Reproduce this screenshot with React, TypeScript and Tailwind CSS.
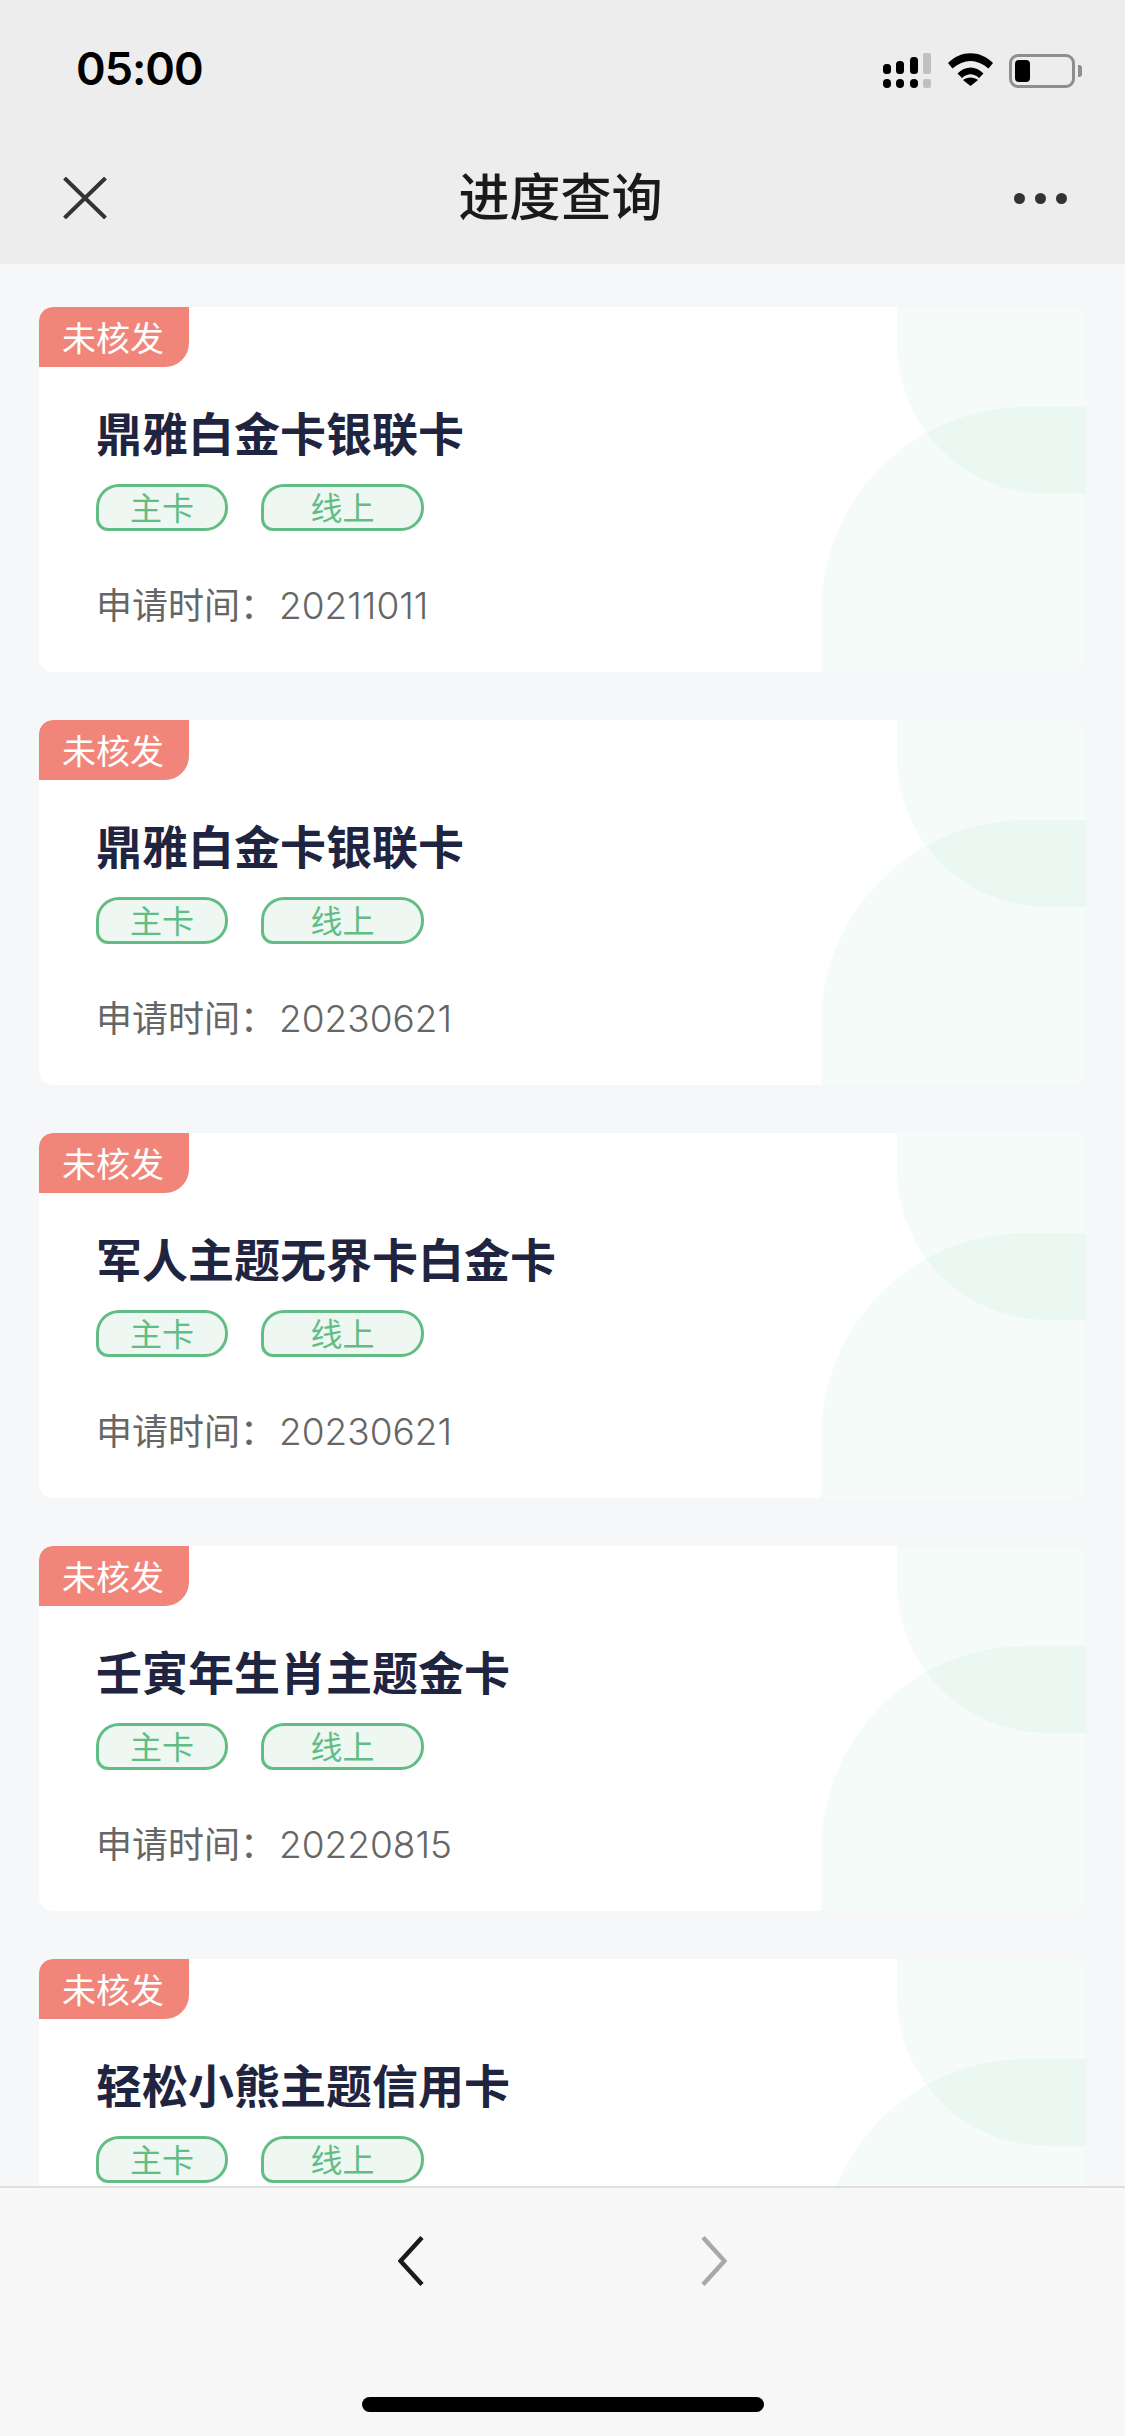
import React from 'react';

const CJK = "font-['Noto_Sans_CJK_SC','Noto_Sans',sans-serif]";

const cards = [
    { name: '鼎雅白金卡银联卡', date: '20211011' },
    { name: '鼎雅白金卡银联卡', date: '20230621' },
    { name: '军人主题无界卡白金卡', date: '20230621' },
    { name: '壬寅年生肖主题金卡', date: '20220815' },
    { name: '轻松小熊主题信用卡', date: '20230621' },
];

function StatusBar() {
    return (
        <div className="flex h-[88px] items-end justify-between pl-[76px] pr-[43px]">
            <span className="font-['Inter',sans-serif] text-[45px] font-semibold leading-[38px] tracking-[-1px] text-black">05:00</span>
            <div className="flex items-center">
                {/* signal */}
                <svg width="48" height="35" viewBox="0 0 48 35" className="mr-[17px]">
                    <rect x="0" y="11" width="8" height="10" rx="3.5" fill="#000" />
                    <rect x="13" y="8" width="8" height="13" rx="3.5" fill="#000" />
                    <rect x="27" y="4" width="8" height="17" rx="3.5" fill="#000" />
                    <rect x="40" y="0" width="8" height="21" rx="2" fill="#c0c0c0" />
                    <rect x="0" y="26" width="8" height="9" rx="4" fill="#000" />
                    <rect x="13" y="26" width="8" height="9" rx="4" fill="#000" />
                    <rect x="27" y="26" width="8" height="9" rx="4" fill="#000" />
                    <rect x="40" y="26" width="8" height="9" rx="2" fill="#c0c0c0" />
                </svg>
                {/* wifi */}
                <svg width="45" height="33" viewBox="0 0 45 33" className="mr-[16px] mb-[2px]">
                    <path d="M0 10 C13 -3 32 -3 45 10 L40.500 15.500 C29 5.500 16 5.500 4.500 15.500 Z" fill="#000" />
                    <path d="M9.500 20.500 C17 12.500 28 12.500 35.500 20.500 L31 25 C25.500 20 19.500 20 14 25 Z" fill="#000" />
                    <path d="M22.500 33 L15 27 C19 23.500 26 23.500 30 27 Z" fill="#000" />
                </svg>
                {/* battery */}
                <div className="flex items-center">
                    <div className="flex h-[34px] w-[66px] items-center rounded-[9px] border-[3px] border-[#8e8e8e] pl-[3px]">
                        <div className="h-[22px] w-[15px] rounded-[4px] bg-black" />
                    </div>
                    <div className="ml-[3px] h-[12px] w-[4px] rounded-r-[3px] bg-[#8e8e8e]" />
                </div>
            </div>
        </div>
    );
}

function NavBar() {
    return (
        <div className="flex h-[176px] items-start justify-between pl-[63px] pr-[58px]">
            <svg width="44" height="42" viewBox="0 0 44 42" className="mt-[89px]">
                <path d="M1.500 1 L42.500 41 M42.500 1 L1.500 41" stroke="#333" strokeWidth="4" fill="none" />
            </svg>
            <span className={`${CJK} mt-[71px] text-[51px] font-medium leading-[70px] text-[#1a1a1a]`}>进度查询</span>
            <div className="mt-[105px] flex gap-[10px]">
                <div className="h-[11px] w-[11px] rounded-full bg-[#333]" />
                <div className="h-[11px] w-[11px] rounded-full bg-[#333]" />
                <div className="h-[11px] w-[11px] rounded-full bg-[#333]" />
            </div>
        </div>
    );
}

function Chip({ label, wide }: { label: string; wide?: boolean }) {
    return (
        <span
            className={`${CJK} flex h-[47px] items-center justify-center rounded-[23px] rounded-bl-[12px] border-[3px] border-[#62bd85] bg-[#eef7f2] pb-[3px] text-[32px] leading-[38px] text-[#62bd85] ${wide ? 'w-[163px]' : 'w-[132px]'}`}
        >
            {label}
        </span>
    );
}

function ProgressCard({ name, date }: { name: string; date: string }) {
    return (
        <div className="relative h-[365px] shrink-0 overflow-hidden rounded-[14px] bg-white">
            {/* background shapes */}
            <div className="absolute right-0 top-0 h-[187px] w-[189px] rounded-bl-[150px] bg-[#54b88d]/[0.06]" />
            <div className="absolute bottom-0 right-0 h-[265px] w-[265px] rounded-tl-[205px] bg-[#54b88d]/[0.06]" />

            <div className={`${CJK} relative flex h-[60px] w-[150px] items-center justify-center rounded-tl-[14px] rounded-br-[24px] bg-[#f1857a] pr-[2px] text-[34px] leading-[48px] text-white`}>
                未核发
            </div>
            <div className="relative pl-[57px]">
                <h2 className={`${CJK} mt-[34px] text-[46px] font-bold leading-[60px] text-[#1f2540]`}>{name}</h2>
                <div className="mt-[23px] flex gap-[33px]">
                    <Chip label="主卡" />
                    <Chip label="线上" wide />
                </div>
                <p className={`${CJK} mt-[46px] flex items-baseline text-[36px] leading-[52px] text-[#666]`}>
                    申请时间：
                    <span className="ml-[3px] font-['Inter',sans-serif] text-[37px] font-light">{date}</span>
                </p>
            </div>
        </div>
    );
}

export default function App() {
    return (
        <div className="flex h-[2436px] w-[1125px] flex-col overflow-hidden bg-[#f5f7f9]">
            <header className="shrink-0 bg-[#ededed]">
                <StatusBar />
                <NavBar />
            </header>

            <main className="flex min-h-0 flex-1 flex-col gap-[48px] overflow-hidden pl-[39px] pr-[39px] pt-[43px]">
                {cards.map((c, i) => (
                    <ProgressCard key={i} name={c.name} date={c.date} />
                ))}
            </main>

            <footer className="flex h-[250px] shrink-0 flex-col items-center border-t-2 border-[#dfdfdf] bg-[#f7f7f7]">
                <div className="mt-[48px] flex gap-[278px]">
                    <svg width="26" height="50" viewBox="0 0 26 50">
                        <path d="M24 1.500 L2.500 25 L24 48.500" stroke="#1a1a1a" strokeWidth="4.500" fill="none" />
                    </svg>
                    <svg width="26" height="50" viewBox="0 0 26 50" className="-ml-[1px]">
                        <path d="M2 1.500 L23.500 25 L2 48.500" stroke="#a8a8a8" strokeWidth="4.500" fill="none" />
                    </svg>
                </div>
                <div className="mt-[111px] h-[15px] w-[402px] rounded-full bg-black" />
            </footer>
        </div>
    );
}
